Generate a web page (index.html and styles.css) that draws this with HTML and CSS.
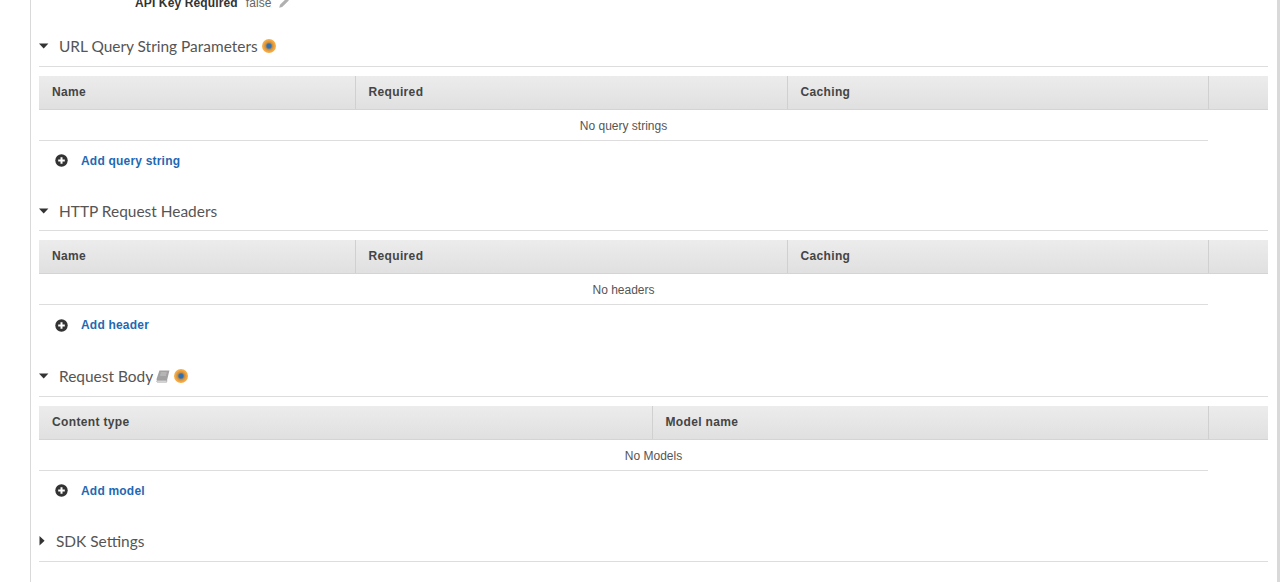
FILE: index.html
```html
<!DOCTYPE html>
<html lang="en">
<head>
<meta charset="utf-8">
<title>Method Request</title>
<link rel="stylesheet" href="styles.css">
</head>
<body>
<main class="panel">
  <div class="meta">
    <span class="meta-label">API Key Required</span>
    <span class="meta-value">false</span>
    <svg class="pencil" width="12" height="12" viewBox="0 0 12 12"><path d="M8.6 1.2l2.2 2.2-6.6 6.6-3 .8.8-3z" fill="#b0b0b0"/></svg>
  </div>

  <section class="block first">
    <h2 class="heading">
      <svg class="caret" width="10" height="6" viewBox="0 0 10 6"><path d="M0 .5h9.4L4.7 5.5z" fill="#333"/></svg>
      <span>URL Query String Parameters</span>
      <span class="dot"></span>
    </h2>
    <div class="head three"><div class="cell">Name</div><div class="cell">Required</div><div class="cell">Caching</div><div class="cell"></div></div>
    <div class="empty">No query strings</div>
    <div class="add">
      <svg class="plus" width="13" height="13" viewBox="0 0 13 13"><circle cx="6.5" cy="6.5" r="6.2" fill="#333"/><path d="M6.5 3.2v6.6M3.2 6.5h6.6" stroke="#fff" stroke-width="2"/></svg>
      <a href="#">Add query string</a>
    </div>
  </section>

  <section class="block tight">
    <h2 class="heading">
      <svg class="caret" width="10" height="6" viewBox="0 0 10 6"><path d="M0 .5h9.4L4.7 5.5z" fill="#333"/></svg>
      <span>HTTP Request Headers</span>
    </h2>
    <div class="head three"><div class="cell">Name</div><div class="cell">Required</div><div class="cell">Caching</div><div class="cell"></div></div>
    <div class="empty">No headers</div>
    <div class="add">
      <svg class="plus" width="13" height="13" viewBox="0 0 13 13"><circle cx="6.5" cy="6.5" r="6.2" fill="#333"/><path d="M6.5 3.2v6.6M3.2 6.5h6.6" stroke="#fff" stroke-width="2"/></svg>
      <a href="#">Add header</a>
    </div>
  </section>

  <section class="block">
    <h2 class="heading">
      <svg class="caret" width="10" height="6" viewBox="0 0 10 6"><path d="M0 .5h9.4L4.7 5.5z" fill="#333"/></svg>
      <span>Request Body</span>
      <svg class="book" width="14" height="13" viewBox="0 0 14 13"><path d="M3.4.6h10L11 10.4H1.2a1 1 0 0 1-.6-1.3z" fill="#a2a2a2"/><path d="M1.2 10.4H11l-.4 1.8H1.6c-1 0-1.2-1-.4-1.8z" fill="#e2e2e2" stroke="#9a9a9a" stroke-width=".6"/><path d="M4.6 3h6M4.2 5h6" stroke="#d2d2d2" stroke-width=".8"/></svg>
      <span class="dot"></span>
    </h2>
    <div class="head two"><div class="cell">Content type</div><div class="cell">Model name</div><div class="cell"></div></div>
    <div class="empty wide">No Models</div>
    <div class="add">
      <svg class="plus" width="13" height="13" viewBox="0 0 13 13"><circle cx="6.5" cy="6.5" r="6.2" fill="#333"/><path d="M6.5 3.2v6.6M3.2 6.5h6.6" stroke="#fff" stroke-width="2"/></svg>
      <a href="#">Add model</a>
    </div>
  </section>

  <section class="block">
    <h2 class="heading">
      <svg class="caret-right" width="6" height="10" viewBox="0 0 6 10"><path d="M.5 0v9.6L5.6 4.8z" fill="#333"/></svg>
      <span>SDK Settings</span>
    </h2>
  </section>
</main>
</body>
</html>
```
FILE: styles.css
```css
html, body {
  margin: 0;
  height: 582px;
  overflow: hidden;
  background: #fff;
}

.panel {
  box-sizing: border-box;
  height: 582px;
  margin-left: 30px;
  padding: 0 9px 0 8px;
  border-left: 1px solid #d9d9d9;
  border-right: 3px solid #d9d9d9;
  font-family: "Liberation Sans", Arial, sans-serif;
  color: #444;
  overflow: hidden;
}

.meta {
  display: flex;
  align-items: center;
  height: 12px;
  margin-top: -3px;
  padding-left: 96px;
  font-size: 12px;
}

.meta-label {
  font-weight: bold;
  letter-spacing: .13px;
  color: #333;
}

.meta-value {
  margin-left: 8px;
  letter-spacing: .1px;
  color: #666;
}

.pencil {
  margin-left: 6px;
}

.block {
  margin-top: 11px;
}

.block.first {
  margin-top: 17px;
}

.heading {
  display: flex;
  align-items: center;
  height: 40px;
  margin: 0 0 9px;
  border-bottom: 1px solid #ddd;
  font-family: Lato, sans-serif;
  font-size: 15.45px;
  font-weight: 400;
  color: #555;
}

.tight .heading {
  height: 39px;
}

.tight .add {
  height: 40px;
}

.caret {
  margin-right: 10px;
}

.caret-right {
  margin-right: 11px;
}

.dot {
  width: 14px;
  height: 14px;
  margin-left: 4px;
  border-radius: 50%;
  background: radial-gradient(circle, #2f6fb0 0 20%, #c98f45 36%, #f3a53a 55%, #f6b65e 78%, #fbe3bf 100%);
}

.book {
  margin-left: 3px;
}

.book + .dot {
  margin-left: 4px;
}

.head {
  display: grid;
  height: 33px;
  background: linear-gradient(#ececec, #e0e0e0);
  border-bottom: 1px solid #d4d4d4;
  font-size: 12px;
  font-weight: bold;
  letter-spacing: .35px;
  color: #444;
}

.three {
  grid-template-columns: 316px 432px 421px 60px;
}

.two {
  grid-template-columns: 613px 556px 60px;
}

.cell {
  display: flex;
  align-items: center;
  padding: 0 0 2px 12.5px;
  border-left: 1px solid #d0d0d0;
}

.cell:first-child {
  padding-left: 13px;
  border-left: 0;
}

.empty {
  box-sizing: border-box;
  width: 1169px;
  height: 31px;
  padding-top: 2px;
  line-height: 28px;
  border-bottom: 1px solid #ddd;
  text-align: center;
  font-size: 12px;
  color: #555;
}

.empty.wide {
  padding-left: 60px;
}

.add {
  display: flex;
  align-items: center;
  gap: 13px;
  height: 39px;
  padding-left: 16px;
}

.add a {
  font-size: 12px;
  font-weight: bold;
  letter-spacing: .2px;
  color: #1f69b3;
  text-decoration: none;
}
```
